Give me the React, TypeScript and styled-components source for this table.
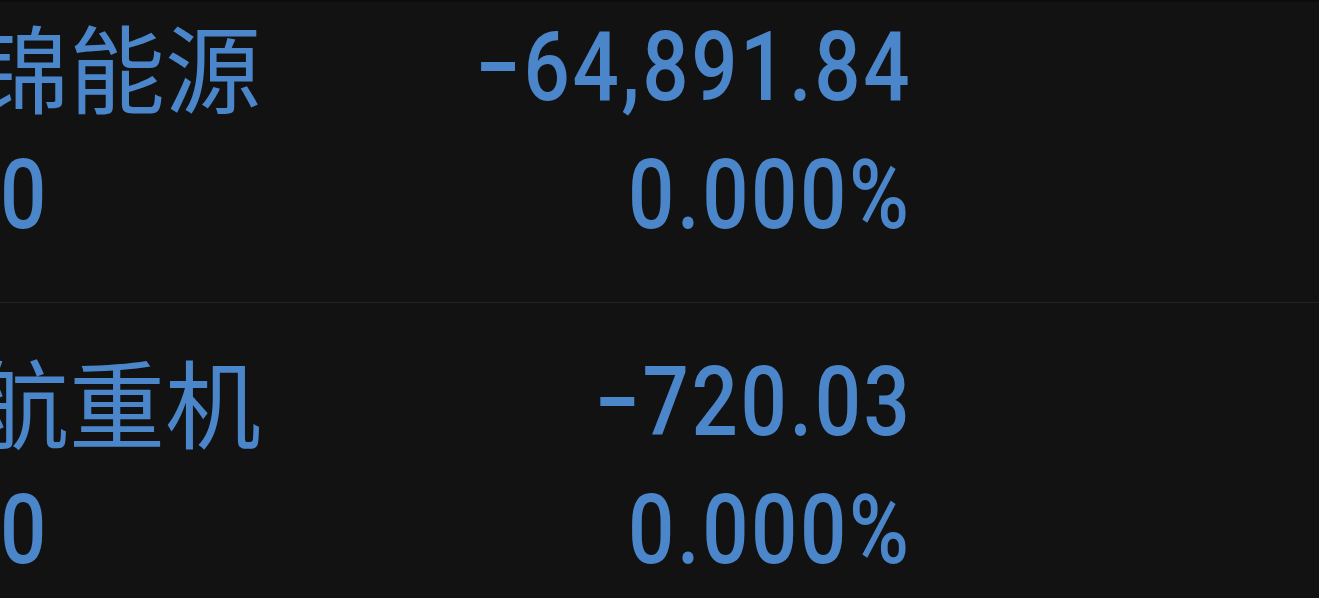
import React from "react";
import styled, { createGlobalStyle } from "styled-components";

const GlobalStyle = createGlobalStyle`
  html, body {
    margin: 0;
    padding: 0;
    background: #121212;
    overflow: hidden;
  }
`;

const Screen = styled.div`
  width: 1319px;
  height: 598px;
  overflow: hidden;
  background: #121212;
  border-top: 2px solid #0c0c0c;
  box-sizing: border-box;
`;

const List = styled.div`
  display: flex;
  flex-direction: column;
  margin-top: -34px;
`;

const Row = styled.div`
  display: flex;
  align-items: flex-start;
  box-sizing: border-box;
  height: 335px;
  padding: 35px 0 43px;
  border-bottom: 1px solid #242424;
`;

const NameCol = styled.div`
  display: flex;
  flex-direction: column;
  width: 300px;
  margin-left: -27px;
  flex: none;
`;

const Name = styled.div`
  font-family: "Noto Sans CJK SC", "Noto Sans", sans-serif;
  font-size: 96px;
  font-weight: 400;
  line-height: 128px;
  margin: -2px 0 2px;
  color: #4a86c9;
  white-space: nowrap;
`;

const CodeLine = styled.div`
  padding-left: 27px;
  line-height: 128px;
`;

const ValueCol = styled.div`
  display: flex;
  flex-direction: column;
  align-items: flex-end;
  width: 639px;
  flex: none;
`;

const NumText = styled.span<{ $origin: "left" | "right" }>`
  display: inline-block;
  font-family: "Roboto", sans-serif;
  font-size: 96px;
  font-weight: 500;
  line-height: 128px;
  letter-spacing: 3px;
  color: #4a86c9;
  white-space: nowrap;
  transform: scaleX(0.85);
  transform-origin: ${(p) => p.$origin} center;
`;

const rows = [
  { name: "锦能源", code: "0", change: "−64,891.84", pct: "0.000%" },
  { name: "航重机", code: "0", change: "−720.03", pct: "0.000%" },
];

export default function App() {
  return (
    <Screen>
      <GlobalStyle />
      <List>
        {rows.map((r) => (
          <Row key={r.name}>
            <NameCol>
              <Name>{r.name}</Name>
              <CodeLine>
                <NumText $origin="left">{r.code}</NumText>
              </CodeLine>
            </NameCol>
            <ValueCol>
              <NumText $origin="right">{r.change}</NumText>
              <NumText $origin="right">{r.pct}</NumText>
            </ValueCol>
          </Row>
        ))}
      </List>
    </Screen>
  );
}
